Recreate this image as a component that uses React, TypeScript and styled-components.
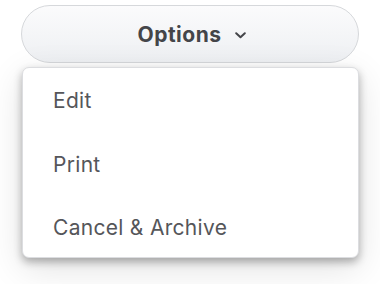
import React from "react";
import styled, { createGlobalStyle } from "styled-components";

const Global = createGlobalStyle`
  html, body { margin: 0; padding: 0; background: #ffffff; }
  body { font-family: Inter, "Noto Sans", sans-serif; }
`;

const Page = styled.div`
  display: flex;
  flex-direction: column;
  gap: 4px;
  padding: 5px 21px 26px 21px;
  width: 338px;
`;

const Trigger = styled.button`
  box-sizing: border-box;
  display: flex;
  align-items: center;
  justify-content: center;
  gap: 13px;
  height: 58px;
  width: 338px;
  padding: 0 0 0 3px;
  border: 1px solid #d6d8db;
  border-radius: 29px;
  background: linear-gradient(to bottom, #fbfbfc 0%, #eef0f3 100%);
  font-family: Inter, sans-serif;
  font-weight: 700;
  font-size: 21px;
  letter-spacing: 0.5px;
  color: #444549;
  cursor: pointer;
`;

const Chevron = styled.svg`
  width: 11px;
  height: 7px;
  margin-top: 3px;
`;

const Menu = styled.ul`
  box-sizing: border-box;
  list-style: none;
  margin: 0 0 0 1px;
  padding: 0;
  width: 337px;
  height: 191px;
  background: #ffffff;
  border: 1px solid #dcdde0;
  border-radius: 7px;
  box-shadow: 0 4px 8px rgba(0, 0, 0, 0.3), 0 10px 36px rgba(0, 0, 0, 0.12);
  display: flex;
  flex-direction: column;
`;

const Item = styled.li`
  flex: 0 0 63.5px;
  display: flex;
  align-items: center;
  padding: 2px 0 0 30px;
  box-sizing: border-box;
  font-size: 21px;
  letter-spacing: 0.3px;
  color: #55565a;
`;

export default function App() {
  return (
    <>
      <Global />
      <Page>
        <Trigger>
          Options
          <Chevron viewBox="0 0 11 7" fill="none">
            <path d="M1.2 1.2 L5.5 5.3 L9.8 1.2" stroke="#444549" strokeWidth="2" strokeLinecap="round" strokeLinejoin="round" />
          </Chevron>
        </Trigger>
        <Menu>
          <Item>Edit</Item>
          <Item>Print</Item>
          <Item>Cancel &amp; Archive</Item>
        </Menu>
      </Page>
    </>
  );
}
